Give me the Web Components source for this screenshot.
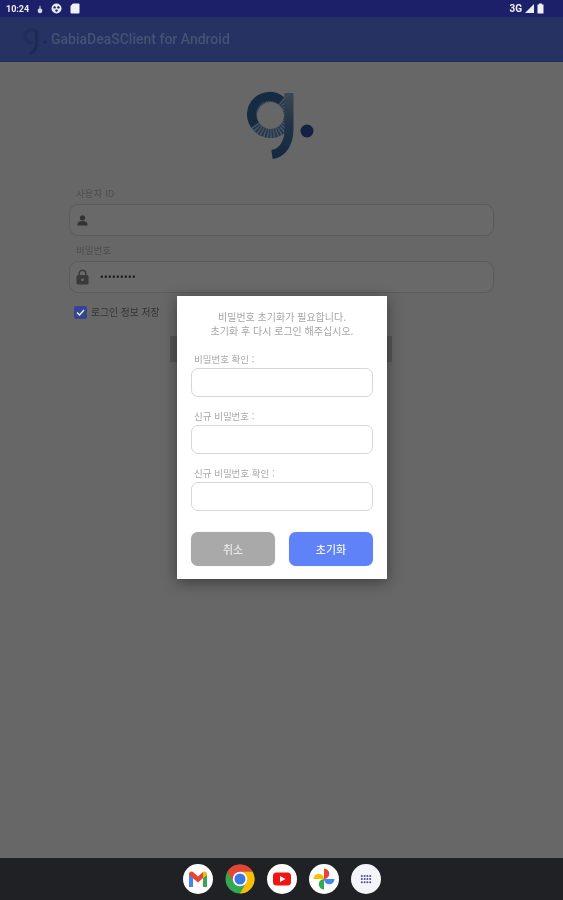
<!DOCTYPE html>
<html lang="ko">
<head>
<meta charset="utf-8">
<title>GabiaDeaSClient for Android</title>
<style>
    html, body { margin: 0; height: 100%; }
    body { font-family: "Noto Sans CJK KR", "Noto Sans", sans-serif; background: #676767; }
</style>
</head>
<body>
<gabia-app></gabia-app>

<script>
class StatusBar extends HTMLElement {
    constructor() {
        super();
        this.attachShadow({ mode: 'open' }).innerHTML = `
            <style>
                :host {
                    display: flex;
                    align-items: center;
                    height: 17px;
                    padding: 0 19px 0 6px;
                    background: #1b2068;
                    color: #f0f0f5;
                    font: 700 9px Roboto, sans-serif;
                }
                .left, .right { display: flex; align-items: center; }
                .left { gap: 8px; }
                .right { gap: 3px; margin-left: auto; }
                .net { font-size: 10px; }
                svg { display: block; }
            </style>
            <div class="left">
                <span>10:24</span>
                <svg width="6" height="10" viewBox="0 0 8 11" fill="#d4d7ea"><path d="M4 0.500 L5 3 H4.600 V4.500 L7 6 V8 A3 3 0 0 1 1 8 V6 L3.400 4.500 V3 H3Z"/></svg>
                <svg width="11" height="11" viewBox="0 0 11 11"><circle cx="5.500" cy="5.500" r="5" fill="#e8eaf4"/><circle cx="3.600" cy="4.400" r="1.200" fill="#1b2068"/><circle cx="7.400" cy="4.400" r="1.200" fill="#1b2068"/><circle cx="5.500" cy="7.600" r="1.200" fill="#1b2068"/></svg>
                <svg width="10" height="11" viewBox="0 0 10 11" fill="#f0f1f8"><path d="M3 0.500 H8.500 A1 1 0 0 1 9.500 1.500 V9.500 A1 1 0 0 1 8.500 10.500 H1.500 A1 1 0 0 1 0.500 9.500 V3Z"/></svg>
            </div>
            <div class="right">
                <span class="net">3G</span>
                <svg width="9" height="9" viewBox="0 0 9 9" fill="#e8eaf4"><path d="M9 0 V9 H0Z"/></svg>
                <svg width="7" height="11" viewBox="0 0 7 11" fill="#f0f1f8"><path d="M2 0.500 H5 V1.500 H6.500 V10.500 H0.500 V1.500 H2Z"/></svg>
            </div>
        `;
    }
}

class AppBar extends HTMLElement {
    constructor() {
        super();
        this.attachShadow({ mode: 'open' }).innerHTML = `
            <style>
                :host {
                    display: flex;
                    align-items: center;
                    gap: 3px;
                    height: 45px;
                    padding-left: 21px;
                    box-sizing: border-box;
                    background: #263262;
                    border-bottom: 1px solid #212c5c;
                    color: #465272;
                    font: 500 14px Roboto, sans-serif;
                }
                svg { display: block; margin-top: -2px; }
            </style>
            <svg width="27" height="34" viewBox="0 0 27 34">
                <path d="M15.500 11 A6.500 6.500 0 1 0 12 21.500" fill="none" stroke="#1e2f58" stroke-width="3"/>
                <path d="M15.500 9 V24 C15.500 28 13 31 9 32" fill="none" stroke="#1a2c52" stroke-width="3"/>
                <circle cx="24" cy="21" r="1.500" fill="#192850"/>
            </svg>
            <slot></slot>
        `;
    }
}

class GabiaLogo extends HTMLElement {
    constructor() {
        super();
        this.attachShadow({ mode: 'open' }).innerHTML = `
            <style>
                :host { display: block; width: 72px; height: 72px; }
                svg { display: block; }
            </style>
            <svg width="72" height="72" viewBox="0 0 72 72">
                <defs>
                    <linearGradient id="stem" x1="0" y1="0" x2="0" y2="1">
                        <stop offset="0" stop-color="#3a4856"/>
                        <stop offset=".5" stop-color="#223345"/>
                        <stop offset="1" stop-color="#142a42"/>
                    </linearGradient>
                </defs>
                <circle cx="25.500" cy="24.500" r="18" fill="none" stroke="#26394c" stroke-width="9"/>
                <circle cx="25.500" cy="24.500" r="18" fill="none" stroke="#4c5a68" stroke-width="9" stroke-dasharray="1.200 1.800"/>
                <path d="M36 9.500 A18 18 0 0 0 10 34" fill="none" stroke="#162a42" stroke-width="9"/>
                <path d="M44 2 V38 C44 53 37 62 27 63.500" fill="none" stroke="url(#stem)" stroke-width="9"/>
                <circle cx="62" cy="40" r="6.500" fill="#152142"/>
            </svg>
        `;
    }
}

class LoginField extends HTMLElement {
    constructor() {
        super();
        this.attachShadow({ mode: 'open' }).innerHTML = `
            <style>
                :host { display: block; }
                label {
                    display: block;
                    height: 15px;
                    margin-left: 7px;
                    font-size: 9.500px;
                    line-height: 15px;
                    color: #4d4d4d;
                }
                .box {
                    display: flex;
                    align-items: center;
                    gap: 11px;
                    height: 32px;
                    margin-top: 3px;
                    padding-left: 6px;
                    box-sizing: border-box;
                    border: 1px solid #5a5a5a;
                    border-radius: 9px;
                    background: #696969;
                }
                .value { font: 700 10px Roboto, sans-serif; letter-spacing: .4px; color: #1f1f1f; }
            </style>
            <label></label>
            <div class="box"><slot name="icon"></slot><span class="value"></span></div>
        `;
    }

    connectedCallback() {
        this.shadowRoot.querySelector('label').textContent = this.getAttribute('label') || '';
        this.shadowRoot.querySelector('.value').textContent = this.getAttribute('value') || '';
    }
}

class DialogField extends HTMLElement {
    constructor() {
        super();
        this.attachShadow({ mode: 'open' }).innerHTML = `
            <style>
                :host { display: block; }
                label {
                    display: block;
                    height: 14px;
                    margin-left: 3px;
                    font-size: 9.500px;
                    line-height: 14px;
                    color: #a8a8a8;
                }
                .box {
                    height: 29px;
                    margin-top: 2px;
                    box-sizing: border-box;
                    border: 1px solid #d6d6d6;
                    border-radius: 7px;
                    background: #fff;
                }
            </style>
            <label></label>
            <div class="box"></div>
        `;
    }

    connectedCallback() {
        this.shadowRoot.querySelector('label').textContent = this.getAttribute('label') || '';
    }
}

class DialogButton extends HTMLElement {
    constructor() {
        super();
        this.attachShadow({ mode: 'open' }).innerHTML = `
            <style>
                :host {
                    display: flex;
                    align-items: center;
                    justify-content: center;
                    flex: 1;
                    height: 34px;
                    border-radius: 7px;
                    background: #a9a9a9;
                    color: #e6e6e6;
                    font-size: 11px;
                    font-weight: 500;
                    box-shadow: 0 0 1px #c8c8c8;
                }
                :host([primary]) { background: #5f82f8; color: #eef2ff; box-shadow: 0 0 1px #a9bcfb; }
            </style>
            <slot></slot>
        `;
    }
}

class ResetDialog extends HTMLElement {
    constructor() {
        super();
        this.attachShadow({ mode: 'open' }).innerHTML = `
            <style>
                :host {
                    position: absolute;
                    left: 177px;
                    top: 296px;
                    width: 210px;
                    height: 283px;
                    box-sizing: border-box;
                    padding: 14px 14px 0;
                    background: #fff;
                    box-shadow: 0 3px 14px rgba(0,0,0,.42);
                }
                .message {
                    height: 30px;
                    text-align: center;
                    font-size: 10px;
                    line-height: 14px;
                    color: #a5a5a5;
                }
                .fields { display: flex; flex-direction: column; gap: 12px; margin-top: 12px; }
                .actions { display: flex; gap: 14px; margin-top: 21px; }
            </style>
            <div class="message"><slot name="message"></slot></div>
            <div class="fields">
                <dialog-field label="비밀번호 확인 :"></dialog-field>
                <dialog-field label="신규 비밀번호 :"></dialog-field>
                <dialog-field label="신규 비밀번호 확인 :"></dialog-field>
            </div>
            <div class="actions">
                <dialog-button>취소</dialog-button>
                <dialog-button primary>초기화</dialog-button>
            </div>
        `;
    }
}

class DockIcon extends HTMLElement {
    constructor() {
        super();
        this.attachShadow({ mode: 'open' }).innerHTML = `
            <style>
                :host { display: block; width: 30px; height: 30px; }
                svg { display: block; }
            </style>
            <svg width="30" height="30" viewBox="0 0 30 30"></svg>
        `;
    }

    connectedCallback() {
        const icons = {
            gmail: `<circle cx="15" cy="15" r="15" fill="#fff"/>
                <path d="M6 9.500 V23 H10 V14Z" fill="#4285f4"/>
                <path d="M20 14 V23 H24 V9.500Z" fill="#34a853"/>
                <path d="M6 10 A2.500 2.500 0 0 1 10 8 L15 12.500 L20 8 V14 L15 18.500 L6 11Z" fill="#ea4335"/>
                <path d="M20 8 A2.500 2.500 0 0 1 24 10 V11 L20 14Z" fill="#fbbc04"/>`,
            chrome: `<circle cx="15" cy="15" r="14.500" fill="#34a853"/>
                <path d="M2.440 7.750 A14.500 14.500 0 0 1 27.560 7.750 H15 L8.720 18.620Z" fill="#ea4335"/>
                <path d="M27.560 7.750 A14.500 14.500 0 0 1 15 29.500 L21.280 18.620 L15 7.750Z" fill="#fbbc04"/>
                <circle cx="15" cy="15" r="7.250" fill="#fff"/>
                <circle cx="15" cy="15" r="5.500" fill="#3b78e7"/>`,
            youtube: `<circle cx="15" cy="15" r="15" fill="#fff"/>
                <rect x="6" y="8.500" width="18" height="13" rx="3.500" fill="#f01414"/>
                <path d="M13 12 L18.500 15 L13 18Z" fill="#fff"/>`,
            photos: `<circle cx="15" cy="15" r="15" fill="#fff"/>
                <path d="M15 15 H4.500 A5.250 5.250 0 0 1 15 15Z" fill="#fbbc04"/>
                <path d="M15 15 V4.500 A5.250 5.250 0 0 1 15 15Z" fill="#ea4335"/>
                <path d="M15 15 H25.500 A5.250 5.250 0 0 1 15 15Z" fill="#4285f4"/>
                <path d="M15 15 V25.500 A5.250 5.250 0 0 1 15 15Z" fill="#34a853"/>`,
            apps: `<circle cx="15" cy="15" r="15" fill="#f4f4fa"/>
                <g fill="#4a4a8c">
                    <circle cx="10.800" cy="12" r="1"/><circle cx="13.600" cy="12" r="1"/><circle cx="16.400" cy="12" r="1"/><circle cx="19.200" cy="12" r="1"/>
                    <circle cx="10.800" cy="15" r="1"/><circle cx="13.600" cy="15" r="1"/><circle cx="16.400" cy="15" r="1"/><circle cx="19.200" cy="15" r="1"/>
                    <circle cx="10.800" cy="18.200" r="1"/><circle cx="13.600" cy="18.200" r="1"/><circle cx="16.400" cy="18.200" r="1"/><circle cx="19.200" cy="18.200" r="1"/>
                </g>`
        };
        this.shadowRoot.querySelector('svg').innerHTML = icons[this.getAttribute('name')] || '';
    }
}

class TaskBar extends HTMLElement {
    constructor() {
        super();
        this.attachShadow({ mode: 'open' }).innerHTML = `
            <style>
                :host {
                    display: flex;
                    align-items: center;
                    justify-content: center;
                    gap: 12px;
                    height: 42px;
                    background: #202124;
                }
            </style>
            <dock-icon name="gmail"></dock-icon>
            <dock-icon name="chrome"></dock-icon>
            <dock-icon name="youtube"></dock-icon>
            <dock-icon name="photos"></dock-icon>
            <dock-icon name="apps"></dock-icon>
        `;
    }
}

class GabiaApp extends HTMLElement {
    constructor() {
        super();
        this.attachShadow({ mode: 'open' }).innerHTML = `
            <style>
                :host {
                    display: flex;
                    flex-direction: column;
                    position: relative;
                    height: 900px;
                    overflow: hidden;
                    background: #676767;
                    filter: blur(.7px);
                }
                main {
                    flex: 1;
                    display: flex;
                    flex-direction: column;
                    padding: 29px 69px 0;
                }
                gabia-logo { align-self: flex-start; margin-left: 176px; }
                login-field { margin-top: 7px; }
                login-field:first-of-type { margin-top: 23px; }
                .remember {
                    display: flex;
                    align-items: center;
                    gap: 4px;
                    height: 16px;
                    margin-top: 11px;
                    margin-left: 5px;
                    font-size: 9.800px;
                    color: #333;
                }
                .check {
                    display: grid;
                    place-items: center;
                    width: 13px;
                    height: 13px;
                    border-radius: 2px;
                    background: #34468f;
                }
                .login {
                    height: 26px;
                    margin: 16px 102px 0 101px;
                    background: #565656;
                }
                svg { display: block; }
            </style>
            <status-bar></status-bar>
            <app-bar>GabiaDeaSClient for Android</app-bar>
            <main>
                <gabia-logo></gabia-logo>
                <login-field label="사용자 ID">
                    <svg slot="icon" width="13" height="13" viewBox="0 0 13 13" fill="#333"><circle cx="6.500" cy="3.800" r="2.600"/><path d="M1.500 11.500 V10 C1.500 8 4 7 6.500 7 S11.500 8 11.500 10 V11.500Z"/></svg>
                </login-field>
                <login-field label="비밀번호" value="•••••••••">
                    <svg slot="icon" width="13" height="16" viewBox="0 0 13 16" fill="#3a3a3a"><path d="M3.200 7 V4.500 A3.300 3.300 0 0 1 9.800 4.500 V7" fill="none" stroke="#3a3a3a" stroke-width="1.400"/><rect x="0.500" y="6" width="12" height="9.500" rx="1.500"/><circle cx="6.500" cy="10.800" r="1.400" fill="#696969"/></svg>
                </login-field>
                <div class="remember">
                    <span class="check"><svg width="11" height="11" viewBox="0 0 11 11"><path d="M2 5.500 L4.500 8 L9 3" fill="none" stroke="#e8e8f0" stroke-width="1.500"/></svg></span>
                    <span>로그인 정보 저장</span>
                </div>
                <div class="login"></div>
            </main>
            <task-bar></task-bar>
            <reset-dialog>
                <span slot="message">비밀번호 초기화가 필요합니다.<br>초기화 후 다시 로그인 해주십시오.</span>
            </reset-dialog>
        `;
    }
}

customElements.define('status-bar', StatusBar);
customElements.define('app-bar', AppBar);
customElements.define('gabia-logo', GabiaLogo);
customElements.define('login-field', LoginField);
customElements.define('dialog-field', DialogField);
customElements.define('dialog-button', DialogButton);
customElements.define('reset-dialog', ResetDialog);
customElements.define('dock-icon', DockIcon);
customElements.define('task-bar', TaskBar);
customElements.define('gabia-app', GabiaApp);
</script>
</body>
</html>
